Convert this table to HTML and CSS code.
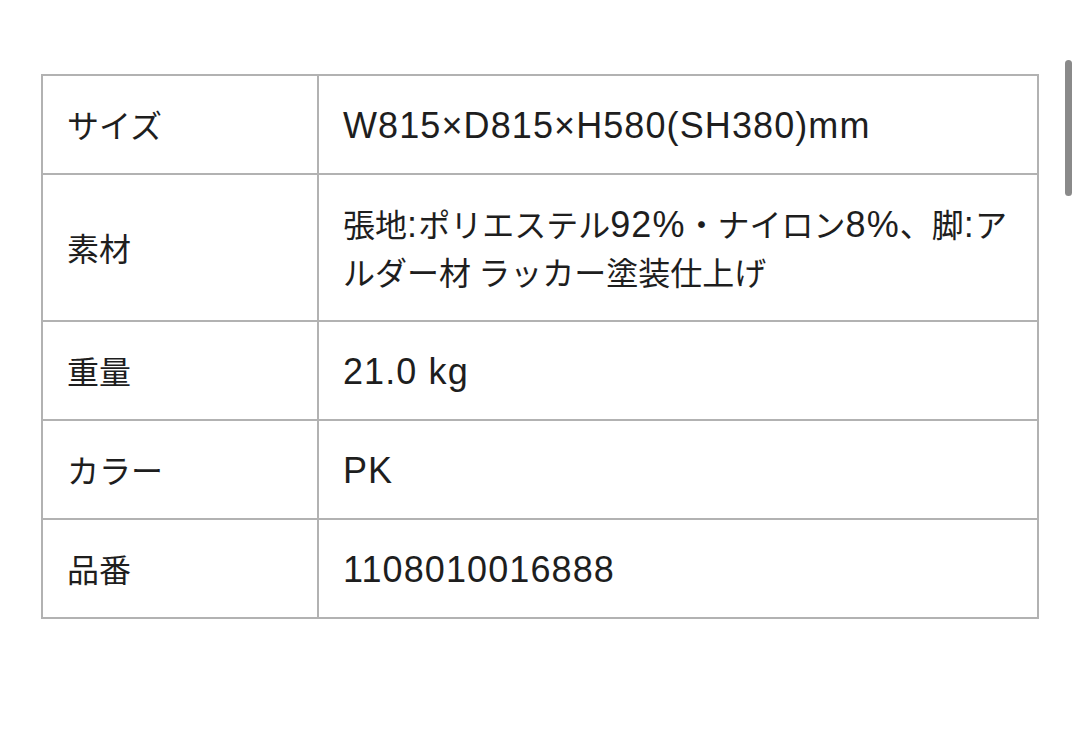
FILE: index.html
```html
<!DOCTYPE html>
<html lang="ja">
<head>
<meta charset="utf-8">
<link rel="stylesheet" href="styles.css">
</head>
<body>
<div class="page">
  <table class="spec">
    <tr><th>サイズ</th><td><span class="lat">W815×D815×H580(SH380)mm</span></td></tr>
    <tr><th>素材</th><td>張地<span class="lat">:</span>ポリエステル<span class="lat">92%</span>・ナイロン<span class="lat">8%</span>、脚<span class="lat">:</span>アルダー材 ラッカー塗装仕上げ</td></tr>
    <tr><th>重量</th><td><span class="lat">21.0 kg</span></td></tr>
    <tr><th>カラー</th><td><span class="lat">PK</span></td></tr>
    <tr><th>品番</th><td><span class="lat">1108010016888</span></td></tr>
  </table>
</div>
<div class="scrollbar"></div>
</body>
</html>
```
FILE: styles.css
```css
html, body {
  margin: 0;
  padding: 0;
  background: #fff;
}
body {
  font-family: "Noto Sans CJK JP", "Noto Sans", sans-serif;
  color: #1e1e1e;
}
.page {
  padding: 74px 0 0 41px;
}
.spec {
  border-collapse: collapse;
  width: 998px;
  table-layout: fixed;
}
.spec th,
.spec td {
  border: 2px solid #b2b2b2;
  padding: 24px 24px 25px;
  font-size: 32px;
  line-height: 48px;
  font-weight: 400;
  text-align: left;
  vertical-align: middle;
}
.spec th {
  width: 226px;
}
.lat {
  font-family: "Liberation Sans", Arial, sans-serif;
  font-size: 36px;
  letter-spacing: 1.1px;
  line-height: 40px;
}
.scrollbar {
  position: fixed;
  top: 60px;
  right: 8px;
  width: 7px;
  height: 136px;
  border-radius: 4px;
  background: #8a8a8a;
}
```
